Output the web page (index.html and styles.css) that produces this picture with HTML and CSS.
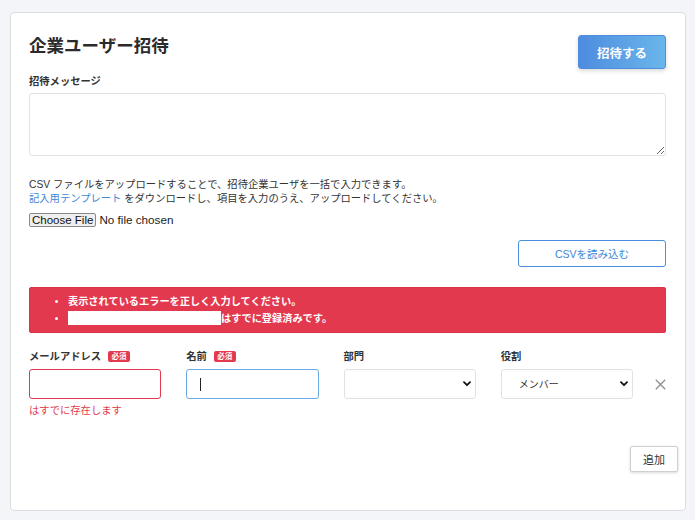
FILE: index.html
```html
<!DOCTYPE html>
<html lang="ja">
<head>
<meta charset="utf-8">
<title>企業ユーザー招待</title>
<link rel="stylesheet" href="styles.css">
</head>
<body>
<div class="card">
  <div class="header">
    <h1 class="title">企業ユーザー招待</h1>
    <button class="btn-primary" type="button">招待する</button>
  </div>

  <label class="label label-msg" for="msg">招待メッセージ</label>
  <textarea id="msg" class="textarea"></textarea>

  <p class="desc">CSV ファイルをアップロードすることで、招待企業ユーザを一括で入力できます。<br><a class="link" href="#">記入用テンプレート</a> をダウンロードし、項目を入力のうえ、アップロードしてください。</p>

  <input class="file" type="file">

  <div class="csv-row">
    <button class="btn-outline" type="button">CSVを読み込む</button>
  </div>

  <div class="alert">
    <ul class="alert-list">
      <li>表示されているエラーを正しく入力してください。</li>
      <li><span class="redacted"></span>はすでに登録済みです。</li>
    </ul>
  </div>

  <div class="fields">
    <div class="field">
      <div class="label">メールアドレス<span class="badge">必須</span></div>
      <input class="input input-error" type="text">
      <div class="error-text">はすでに存在します</div>
    </div>
    <div class="field">
      <div class="label">名前<span class="badge">必須</span></div>
      <div class="input-wrap">
        <input class="input input-focus" type="text">
        <span class="caret"></span>
      </div>
    </div>
    <div class="field">
      <div class="label">部門</div>
      <div class="select-wrap">
        <select class="select"><option></option></select>
        <svg class="chevron" width="8" height="6" viewBox="0 0 8 6"><path d="M1 1.2 L4 4.2 L7 1.2" fill="none" stroke="#111" stroke-width="1.8" stroke-linecap="round" stroke-linejoin="round"/></svg>
      </div>
    </div>
    <div class="field">
      <div class="label">役割</div>
      <div class="select-wrap">
        <select class="select"><option>メンバー</option></select>
        <svg class="chevron" width="8" height="6" viewBox="0 0 8 6"><path d="M1 1.2 L4 4.2 L7 1.2" fill="none" stroke="#111" stroke-width="1.8" stroke-linecap="round" stroke-linejoin="round"/></svg>
      </div>
    </div>
    <div class="remove">
      <svg width="11" height="11" viewBox="0 0 11 11"><path d="M0.8 0.8 L10.2 10.2 M10.2 0.8 L0.8 10.2" stroke="#8e8e8e" stroke-width="1.3" fill="none"/></svg>
    </div>
  </div>

  <div class="add-row">
    <button class="btn-add" type="button">追加</button>
  </div>
</div>
</body>
</html>
```
FILE: styles.css
```css
* { box-sizing: border-box; }

body {
  margin: 0;
  background: #f4f5f9;
  font-family: "Liberation Sans", "Noto Sans CJK JP", sans-serif;
  color: #333;
  font-size: 10.3px;
}

.card {
  width: 676px;
  margin: 12px 0 0 10px;
  background: #fff;
  border: 1px solid #dcdde1;
  border-radius: 4px;
  padding: 22px 19px 38px 18px;
}

.header {
  display: flex;
  justify-content: space-between;
  align-items: flex-start;
}

.title {
  margin: -1px 0 0 0;
  font-size: 17.5px;
  line-height: 24px;
  font-weight: 700;
  color: #2b2b2b;
}

.btn-primary {
  width: 88px;
  height: 34px;
  border: 1px solid #4f8ddf;
  border-radius: 3px;
  background: linear-gradient(90deg, #4e8cdf 0%, #6ab6eb 100%);
  color: #fff;
  font-family: inherit;
  font-size: 12.5px;
  font-weight: 700;
  box-shadow: 0 2px 4px rgba(0,0,0,0.15);
  padding: 0;
}

.label {
  display: block;
  font-weight: 700;
  font-size: 10.3px;
  line-height: 15px;
  color: #333;
}

.label-msg {
  margin-top: 5px;
  margin-bottom: 4px;
}

.textarea {
  display: block;
  width: 100%;
  height: 63px;
  border: 1px solid #dde3e6;
  border-radius: 3px;
  resize: vertical;
  margin: 0;
}

.desc {
  margin: 21.5px 0 0 0;
  line-height: 14px;
  font-size: 10.3px;
  color: #333;
}

.link {
  color: #3d87d8;
  text-decoration: none;
}

.file {
  display: block;
  margin-top: 7.5px;
  height: 14px;
  font-family: "Liberation Sans", sans-serif;
  font-size: 11.7px;
  line-height: 14px;
  color: #222;
  padding: 0;
}

.file::file-selector-button {
  height: 14px;
  padding: 0 2px;
  margin: 0 3px 0 0;
  border: 1px solid #8a8a8a;
  border-radius: 2px;
  background: #efefef;
  font-family: "Liberation Sans", sans-serif;
  font-size: 11.5px;
  line-height: 12px;
  color: #111;
}

.csv-row {
  display: flex;
  justify-content: flex-end;
  margin-top: 13px;
}

.btn-outline {
  width: 148px;
  height: 27px;
  background: #fff;
  border: 1px solid #4a8ee0;
  border-radius: 3px;
  color: #3d86d8;
  font-family: inherit;
  font-size: 10.5px;
  padding: 0;
}

.alert {
  margin-top: 20px;
  height: 46px;
  background: #e2394f;
  border: 1px solid #d93347;
  border-radius: 2px;
  padding: 5px 0;
  color: #fff;
  font-weight: 700;
}

.alert-list {
  margin: 0;
  padding-left: 38px;
  line-height: 17px;
  font-size: 10.2px;
}

.redacted {
  display: inline-block;
  width: 153px;
  height: 14px;
  background: #fff;
  vertical-align: -3px;
}

.fields {
  display: flex;
  margin-top: 16px;
}

.field {
  flex: 1;
  min-width: 0;
  margin-right: 25px;
}

.field:nth-child(4) {
  margin-right: 0;
}

.fields .label {
  margin-bottom: 5px;
}

.badge {
  display: inline-block;
  margin-left: 7px;
  width: 22px;
  height: 11px;
  line-height: 11px;
  text-align: center;
  background: #e2394f;
  color: #fff;
  font-size: 7.5px;
  font-weight: 700;
  border-radius: 2px;
  vertical-align: 1px;
}

.input {
  display: block;
  width: 100%;
  height: 30px;
  border: 1px solid #dde3e6;
  border-radius: 3px;
  padding: 0 13px;
  margin: 0;
  background: #fff;
}

.input-error { border-color: #e2394f; }
.input-focus { border-color: #6aa9e6; outline: none; }

.input-wrap,
.select-wrap {
  position: relative;
}

.caret {
  position: absolute;
  left: 14px;
  top: 9px;
  width: 1px;
  height: 13px;
  background: #222;
}

.error-text {
  margin-top: 4px;
  line-height: 15px;
  color: #e2394f;
  font-size: 10.3px;
}

.select {
  display: block;
  width: 100%;
  height: 30px;
  border: 1px solid #dde3e6;
  border-radius: 3px;
  background: #fff;
  appearance: none;
  -webkit-appearance: none;
  padding: 0 17px;
  font-family: inherit;
  font-size: 10px;
  color: #333;
  margin: 0;
}

.chevron {
  position: absolute;
  right: 5px;
  top: 12px;
  pointer-events: none;
}

.remove {
  flex: 0 0 33px;
  height: 30px;
  margin-top: 20px;
  display: flex;
  align-items: center;
  justify-content: flex-end;
}

.add-row {
  display: flex;
  justify-content: flex-end;
  margin-top: 28px;
  margin-right: -12px;
}

.btn-add {
  width: 48px;
  height: 26px;
  background: #fff;
  border: 1px solid #cfcfcf;
  border-radius: 2px;
  box-shadow: 0 1px 3px rgba(0,0,0,0.15);
  font-family: inherit;
  font-size: 11px;
  color: #333;
  padding: 0;
}
```
